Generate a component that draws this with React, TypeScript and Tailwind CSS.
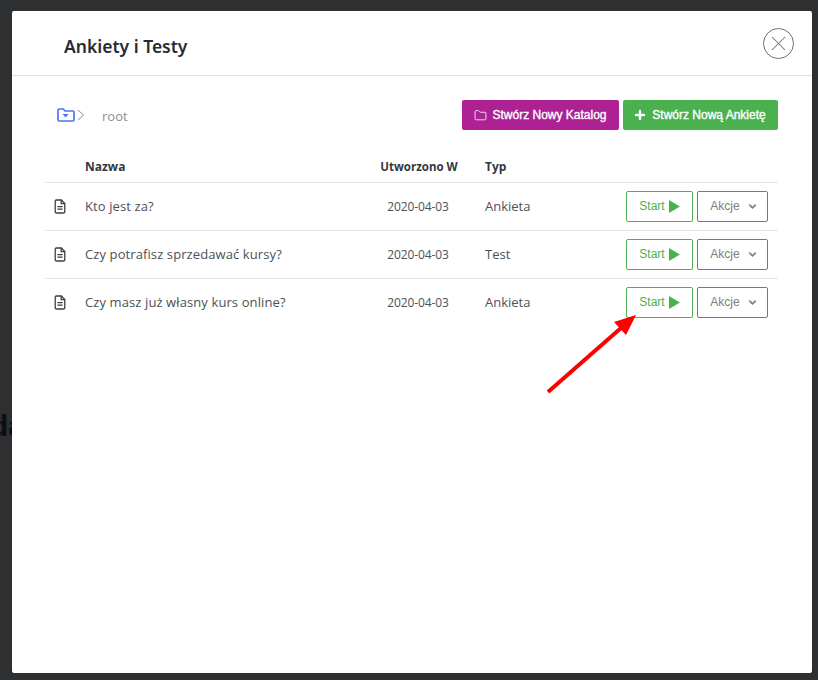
import { ChevronDown, Plus, Folder, X } from "lucide-react";

const rows = [
  { name: "Kto jest za?", date: "2020-04-03", type: "Ankieta" },
  { name: "Czy potrafisz sprzedawać kursy?", date: "2020-04-03", type: "Test" },
  { name: "Czy masz już własny kurs online?", date: "2020-04-03", type: "Ankieta" },
];

function FileIcon() {
  return (
    <svg width="12" height="15" viewBox="0 0 12 15" fill="none" stroke="#3a3f45" strokeWidth="1.3">
      <path d="M1.2 2.2a1.2 1.2 0 0 1 1.2-1.2h5l3.4 3.4v8.4a1.2 1.2 0 0 1-1.2 1.2H2.4a1.2 1.2 0 0 1-1.2-1.2z" />
      <path d="M7.2 1v3.6h3.6" />
      <path d="M3.4 7.6h5.2M3.4 10.2h5.2" />
    </svg>
  );
}

function FolderIcon() {
  return (
    <svg width="18" height="14" viewBox="0 0 18 14" fill="none">
      <path
        d="M1 2.2A1.2 1.2 0 0 1 2.2 1h4.2l1.6 2h7.8A1.2 1.2 0 0 1 17 4.2v7.6a1.2 1.2 0 0 1-1.2 1.2H2.2A1.2 1.2 0 0 1 1 11.800z"
        stroke="#4f72fb"
        strokeWidth="1.7"
      />
      <path d="M5.500 6h6.200L8.600 9.400z" fill="#4f72fb" />
    </svg>
  );
}

function Row({ name, date, type, last }: { name: string; date: string; type: string; last: boolean }) {
  return (
    <div className={`flex h-[48px] items-center border-b text-[13px] text-[#4b5157] ${last ? "border-transparent" : "border-[#e4e5e7]"}`}>
      <div className="flex w-[40px] shrink-0 justify-start pl-[9px]">
        <FileIcon />
      </div>
      <div className="w-[270px] shrink-0 text-[13px] tracking-[0.1px]">{name}</div>
      <div className="w-[128px] shrink-0 pr-[2px] text-center text-[12px] tracking-[-0.1px]">{date}</div>
      <div className="flex-1 pl-[2px]">{type}</div>
      <div className="flex items-center gap-[4px] pr-[10px] font-['Liberation_Sans',sans-serif] text-[12px]">
        <button className="flex h-[31px] w-[67px] items-center justify-center gap-[4px] rounded-[2px] border border-[#4caf50] pb-[1px] text-[#4caf50]">
          Start
          <svg width="11" height="13" viewBox="0 0 11 13">
            <path d="M0 0l11 6.500L0 13z" fill="#4caf50" />
          </svg>
        </button>
        <button className="flex h-[31px] w-[71px] items-center justify-center gap-[7px] rounded-[2px] border border-[#75797d] pb-[1px] pl-[3px] text-[#7b7e82]">
          Akcje
          <ChevronDown size={11} strokeWidth={3.5} />
        </button>
      </div>
    </div>
  );
}

export default function App() {
  return (
    <div className="relative flex h-[680px] w-[818px] overflow-hidden bg-[#2e2f31] font-['Open_Sans','Noto_Sans',sans-serif]">
      {/* page text showing behind the overlay */}
      <div className="flex w-[12px] shrink-0 items-center justify-end overflow-hidden pt-[170px] font-['Liberation_Sans',sans-serif] text-[30px] font-bold text-[#0b0f14]">
        <span className="mr-[-13px] shrink-0">da</span>
      </div>

      <div className="mt-[11px] flex h-[662px] w-[800px] shrink-0 flex-col rounded-[2px] bg-white">
        {/* Header */}
        <div className="flex h-[65px] shrink-0 items-center justify-between border-b border-[#e2e3e5] pl-[52px] pr-[18px]">
          <h2 className="pt-[6px] font-['Noto_Sans',sans-serif] text-[17.5px] font-semibold text-[#272c33]">Ankiety i Testy</h2>
          <button className="flex h-[31px] w-[31px] items-center justify-center rounded-full border border-[#6c7075] text-[#6c7075]">
            <X size={25} strokeWidth={1} />
          </button>
        </div>

        {/* Toolbar */}
        <div className="flex items-center justify-between pl-[45px] pr-[34px] pt-[24px]">
          <div className="flex items-center">
            <FolderIcon />
            <svg width="8" height="12" viewBox="0 0 8 12" fill="none" stroke="#8a8d91" strokeWidth="1" className="ml-[2px]">
              <path d="M1 1l5.500 5L1 11" />
            </svg>
            <span className="ml-[17px] pt-[3px] text-[13px] text-[#8b8f93]">root</span>
          </div>
          <div className="flex gap-[4px] font-['Liberation_Sans',sans-serif] text-[12px] text-white [-webkit-text-stroke:0.35px_white]">
            <button className="flex h-[30px] w-[157px] items-center justify-center gap-[5px] rounded-[2px] bg-[#ae2195]">
              <Folder size={13} strokeWidth={1.5} />
              Stwórz Nowy Katalog
            </button>
            <button className="flex h-[30px] w-[155px] items-center justify-center gap-[5px] rounded-[2px] bg-[#4bb14f] pr-[2px]">
              <Plus size={14} strokeWidth={4} />
              Stwórz Nową Ankietę
            </button>
          </div>
        </div>

        {/* Table */}
        <div className="ml-[33px] mr-[34px] mt-[23px]">
          <div className="flex h-[30px] items-center border-b border-[#e4e5e7] pb-[1px] text-[12px] font-bold text-[#33383e]">
            <div className="w-[40px] shrink-0" />
            <div className="w-[270px] shrink-0">Nazwa</div>
            <div className="w-[128px] shrink-0 text-center text-[11.5px]">Utworzono W</div>
            <div className="flex-1 pl-[2px]">Typ</div>
          </div>
          {rows.map((row, i) => (
            <Row key={row.name} {...row} last={i === rows.length - 1} />
          ))}
        </div>
      </div>

      {/* Red annotation arrow drawn on top of the screenshot */}
      <svg className="pointer-events-none absolute left-[540px] top-[310px]" width="100" height="90" viewBox="540 310 100 90">
        <path d="M548 392L621 328" stroke="#fd0000" strokeWidth="4" />
        <path d="M636 315l-22 7 12 13z" fill="#fd0000" />
      </svg>
    </div>
  );
}
